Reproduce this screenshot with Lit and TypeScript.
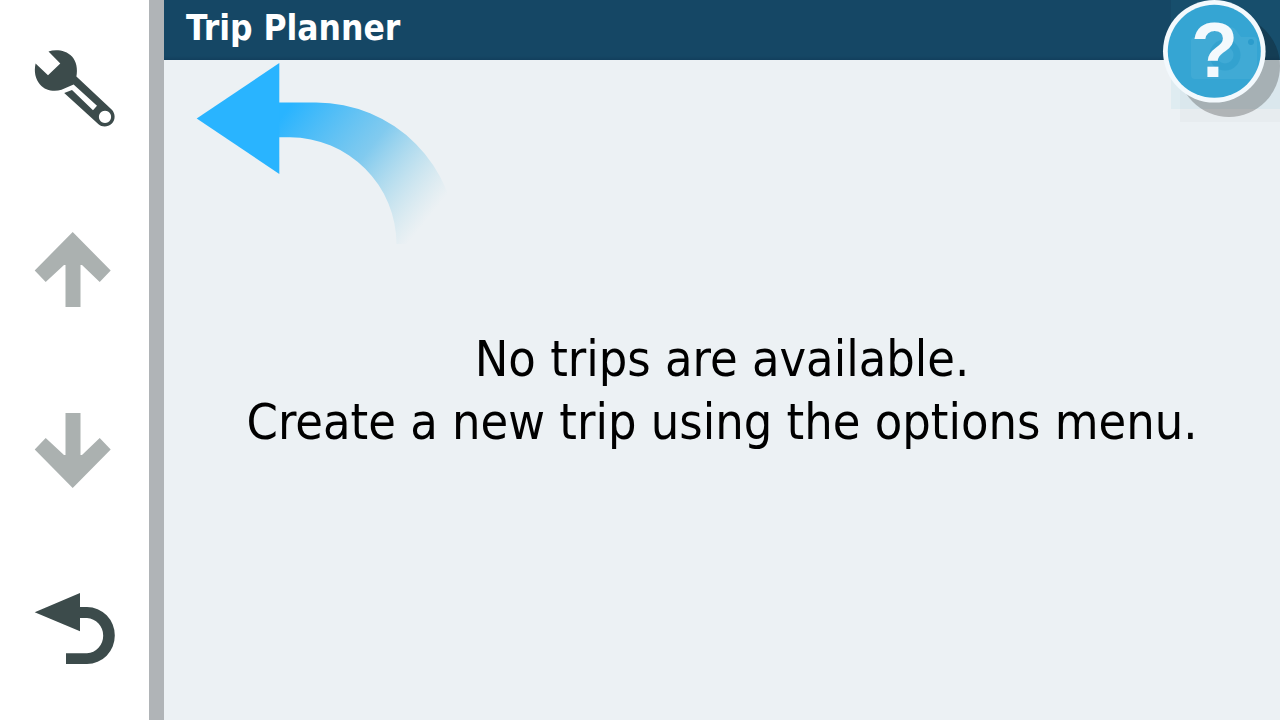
import { LitElement, html, css, svg } from "lit";
import { customElement } from "lit/decorators.js";

const wrench = svg`
  <path fill-rule="evenodd" d="M13.500 1.400 C21 -.9 31 .2 37 6.500 C41.500 11.500 42.800 19 41.400 26.500
    L76.600 59.500 C80.600 63.500 80.600 70 76.600 73.800 C72.600 77.500 67 77.300 63.500 74.300 L29.200 43 L37 40
    L58 60.300 L62 55.800 L38.600 34.500 L26.500 39.800 C19 42.200 10 40.500 5 34.500 C.3 29 -1.200 22 .6 13.600
    L13 25.300 L25.300 13.500 Z M70 60.800 a6.100 6.100 0 1 0 .01 0 Z"/>`;
const arrowUp = svg`<path d="M37.700 0 L75.700 38.500 L64.700 50 L47 33 L45.500 33 L45.500 75 L30.500 75 L30.500 33 L29 33 L10.700 50 L-.3 38.500 Z"/>`;
const arrowDown = svg`<path d="M37.700 76 L75.700 37.500 L64.700 26 L47 43 L45.500 43 L45.500 1 L30.500 1 L30.500 43 L29 43 L10.700 26 L-.3 37.500 Z"/>`;
const back = svg`<path d="M-.3 19.200 L45 0 L45 14 L52 14 A27.800 28.500 0 0 1 52 71 L31 71 L31 60.300 L52 60.300 A17.500 17.700 0 0 0 52 25 L45 25 L45 38.300 Z"/>`;

@customElement("app-root")
export class AppRoot extends LitElement {
  static styles = css`
    :host {
      display: grid;
      grid-template-columns: auto minmax(0, 1fr);
      min-height: 100vh;
      position: relative;
      overflow: hidden;
      background: #ecf1f4;
      font-family: "DejaVu Sans Condensed", "DejaVu Sans", sans-serif;
      font-stretch: condensed;
      color: #000;
    }
    button {
      border: 0;
      padding: 0;
      background: none;
      font: inherit;
      cursor: pointer;
    }
    svg {
      display: block;
    }
    .rail {
      display: flex;
      flex-direction: column;
      justify-content: space-between;
      box-sizing: border-box;
      width: 164px;
      padding: 50px 0 56px;
      background: #fff;
      border-right: 15px solid #b0b4b7;
    }
    .tool {
      display: flex;
      padding-left: 35px;
      color: #3c4b4b;
    }
    .tool:disabled {
      color: #abb1b0;
      cursor: default;
    }
    .tool svg {
      fill: currentColor;
      overflow: visible;
    }
    .page {
      display: grid;
      grid-template-rows: auto 1fr;
    }
    .bar {
      display: flex;
      align-items: center;
      height: 60px;
      box-sizing: border-box;
      padding: 0 22px 4px;
      background: linear-gradient(#154765 56px, #123f5d);
      color: #fff;
    }
    h1 {
      margin: 0;
      font-size: 35px;
      line-height: 42px;
      font-weight: bold;
    }
    main {
      display: grid;
    }
    .hint,
    .message {
      grid-area: 1 / 1;
    }
    .hint {
      padding: 2px 32px;
    }
    .message {
      align-self: center;
      margin: 0;
      padding-top: 2px;
      text-align: center;
      font-size: 50px;
      line-height: 63px;
    }
    .help {
      position: absolute;
      top: 0;
      right: 0;
    }
    .mark {
      font: bold 77px "Liberation Sans", sans-serif;
    }
  `;

  private tool(label: string, icon: unknown, width: number, height: number, disabled = false) {
    return html`<button class="tool" aria-label=${label} ?disabled=${disabled}>
      <svg width=${width} height=${height} viewBox="0 0 ${width} ${height}" aria-hidden="true">${icon}</svg>
    </button>`;
  }

  render() {
    return html`
      <nav class="rail" aria-label="Actions">
        ${this.tool("Options", wrench, 80, 76)}
        ${this.tool("Scroll up", arrowUp, 76, 75, true)}
        ${this.tool("Scroll down", arrowDown, 76, 75, true)}
        ${this.tool("Back", back, 80, 71)}
      </nav>
      <div class="page">
        <header class="bar"><h1>Trip Planner</h1></header>
        <main>
          <div class="hint">
            <svg width="254" height="188" viewBox="196 62 254 188" aria-hidden="true">
              <defs>
                <linearGradient id="fade" gradientUnits="userSpaceOnUse" x1="283" y1="115" x2="422" y2="226">
                  <stop offset="0" stop-color="#29b4ff" />
                  <stop offset="0.5" stop-color="#4fb8ec" stop-opacity="0.68" />
                  <stop offset="1" stop-color="#8accdf" stop-opacity="0" />
                </linearGradient>
              </defs>
              <path fill="url(#fade)" d="M279 102.500 H316 A141 141 0 0 1 457 244 H396.500 A107 107 0 0 0 290 137.300 H279 Z" />
              <path fill="#29b4ff" d="M196.700 118.500 L279.300 63 V174 Z" />
            </svg>
          </div>
          <p class="message">No trips are available.<br />Create a new trip using the options menu.</p>
        </main>
      </div>
      <button class="help" aria-label="Help">
        <svg width="120" height="125" viewBox="1160 0 120 125" aria-hidden="true">
          <path fill="#000" fill-opacity="0.02" d="M1180 60 H1280 V122 H1180 Z" />
          <path fill="#35a5d3" fill-opacity="0.07" d="M1171 0 H1280 V109 H1171 Z" />
          <circle cx="1229" cy="66" r="51" fill="#0a0a0a" fill-opacity="0.25" />
          <circle cx="1214.300" cy="51.300" r="51.300" fill="#f3f9fd" />
          <circle cx="1214.300" cy="51.300" r="46.500" fill="#35a5d3" />
          <path fill="#fff" fill-opacity="0.06" d="M1195 37 H1206 L1212 29 Q1214 27 1217 27 H1230 Q1233 27 1235 29 L1241 37 H1254 Q1257 37 1257 41 V75 Q1257 79 1253 79 H1195 Q1191 79 1191 75 V41 Q1191 37 1195 37 Z" />
          <circle cx="1225" cy="55" r="12" fill="none" stroke="#2b9ccc" stroke-opacity="0.6" stroke-width="7" />
          <circle cx="1251" cy="42" r="3" fill="#2b9ccc" />
          <text class="mark" x="1214.500" y="77" text-anchor="middle" fill="#f3f9fd">?</text>
        </svg>
      </button>
    `;
  }
}
